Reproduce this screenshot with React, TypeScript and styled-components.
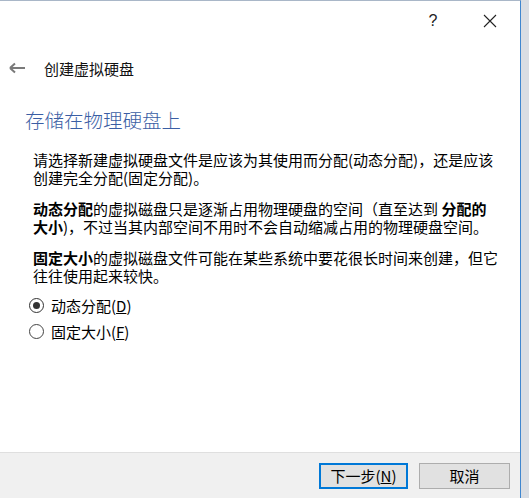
import styled, { createGlobalStyle } from "styled-components";
import { ReactNode, useState } from "react";

const GlobalStyles = createGlobalStyle`
  html, body {
    margin: 0;
    padding: 0;
    height: 100%;
  }
  body {
    background: #d9dde3;
    font-family: "Noto Sans CJK SC", "Liberation Sans", sans-serif;
    overflow: hidden;
  }
`;

const Dialog = styled.div`
  display: flex;
  flex-direction: column;
  width: 521px;
  height: 498px;
  box-sizing: border-box;
  background: #ffffff;
  border-top: 1px solid #a9b7c8;
  border-right: 1px solid #3f86cf;
`;

const TitleBar = styled.div`
  display: flex;
  justify-content: flex-end;
  align-items: center;
  gap: 11px;
  height: 39px;
  padding-right: 7px;
`;

const TitleButton = styled.button`
  display: flex;
  align-items: center;
  justify-content: center;
  width: 46px;
  height: 39px;
  padding: 0;
  border: none;
  background: transparent;
  color: #222;
  font-family: "Liberation Sans", sans-serif;
  font-size: 16px;
`;

const NavRow = styled.div`
  display: flex;
  align-items: center;
  height: 56px;
  padding-left: 9px;
  gap: 18px;
  font-size: 15px;
  color: #111;
`;

const Content = styled.div`
  flex: 1;
  display: flex;
  flex-direction: column;
`;

const Heading = styled.h1`
  margin: 10px 0 0 25px;
  font-size: 19.5px;
  line-height: 28px;
  font-weight: 300;
  color: #3a5ea4;
`;

const Paragraph = styled.p<{ $top: number }>`
  margin: ${({ $top }) => $top}px 0 0 33px;
  font-size: 15px;
  line-height: 18px;
  color: #000;
  white-space: nowrap;
  b {
    font-weight: 700;
  }
`;

const RadioGroup = styled.div`
  display: flex;
  flex-direction: column;
  margin: 7px 0 0 29px;
`;

const RadioRow = styled.label`
  display: flex;
  align-items: center;
  gap: 7px;
  height: 26px;
  font-size: 15px;
  color: #000;
  cursor: pointer;
  u {
    text-decoration: underline;
  }
`;

const RadioCircle = styled.span<{ $checked: boolean }>`
  position: relative;
  width: 13px;
  height: 13px;
  border-radius: 50%;
  border: 1px solid ${({ $checked }) => ($checked ? "#333" : "#444")};
  background: #fff;
  &::after {
    content: "";
    position: absolute;
    left: 3px;
    top: 3px;
    width: 7px;
    height: 7px;
    border-radius: 50%;
    background: #333;
    display: ${({ $checked }) => ($checked ? "block" : "none")};
  }
`;

const Footer = styled.div`
  display: flex;
  justify-content: flex-end;
  align-items: center;
  gap: 11px;
  height: 46px;
  box-sizing: border-box;
  padding-right: 10px;
  background: #f0f0f0;
  border-top: 1px solid #dfdfdf;
`;

const Button = styled.button<{ $primary?: boolean }>`
  width: ${({ $primary }) => ($primary ? "89px" : "91px")};
  height: 26px;
  box-sizing: border-box;
  padding: 0;
  background: #e1e1e1;
  border: ${({ $primary }) => ($primary ? "2px solid #0078d7" : "1px solid #adadad")};
  font-family: "Noto Sans CJK SC", "Liberation Sans", sans-serif;
  font-size: 15px;
  color: #000;
  u {
    text-decoration: underline;
  }
`;

const Radio = ({
  checked,
  onSelect,
  children,
}: {
  checked: boolean;
  onSelect: () => void;
  children: ReactNode;
}) => (
  <RadioRow onClick={onSelect}>
    <RadioCircle $checked={checked} />
    {children}
  </RadioRow>
);

export default function App() {
  const [mode, setMode] = useState<"dynamic" | "fixed">("dynamic");

  return (
    <>
      <GlobalStyles />
      <Dialog>
        <TitleBar>
          <TitleButton>?</TitleButton>
          <TitleButton>
            <svg width="14" height="14" viewBox="0 0 14 14">
              <path d="M1 1 L13 13 M13 1 L1 13" stroke="#222" strokeWidth="1.1" />
            </svg>
          </TitleButton>
        </TitleBar>
        <Content>
          <NavRow>
            <svg width="17" height="12" viewBox="0 0 17 12">
              <path
                d="M1 6 H16 M1 6 L6 1.5 M1 6 L6 10.5"
                stroke="#7a7a7a"
                strokeWidth="2"
                fill="none"
              />
            </svg>
            创建虚拟硬盘
          </NavRow>
          <Heading>存储在物理硬盘上</Heading>
          <Paragraph $top={17}>
            请选择新建虚拟硬盘文件是应该为其使用而分配(动态分配)，还是应该
            <br />
            创建完全分配(固定分配)。
          </Paragraph>
          <Paragraph $top={13}>
            <b>动态分配</b>的虚拟磁盘只是逐渐占用物理硬盘的空间（直至达到 <b>分配的</b>
            <br />
            <b>大小</b>)，不过当其内部空间不用时不会自动缩减占用的物理硬盘空间。
          </Paragraph>
          <Paragraph $top={13}>
            <b>固定大小</b>的虚拟磁盘文件可能在某些系统中要花很长时间来创建，但它
            <br />
            往往使用起来较快。
          </Paragraph>
          <RadioGroup>
            <Radio checked={mode === "dynamic"} onSelect={() => setMode("dynamic")}>
              <span>
                动态分配(<u>D</u>)
              </span>
            </Radio>
            <Radio checked={mode === "fixed"} onSelect={() => setMode("fixed")}>
              <span>
                固定大小(<u>F</u>)
              </span>
            </Radio>
          </RadioGroup>
        </Content>
        <Footer>
          <Button $primary>
            下一步(<u>N</u>)
          </Button>
          <Button>取消</Button>
        </Footer>
      </Dialog>
    </>
  );
}
